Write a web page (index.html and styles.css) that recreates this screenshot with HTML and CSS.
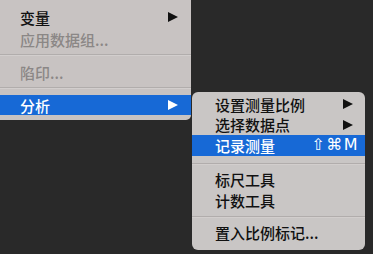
FILE: index.html
```html
<!DOCTYPE html>
<html lang="zh-CN">
<head>
<meta charset="utf-8">
<link rel="stylesheet" href="styles.css">
</head>
<body>
<div class="stage">
  <div class="menu main">
    <div class="item r1"><span class="label">变量</span><span class="arrow"></span></div>
    <div class="item r1 disabled"><span class="label">应用数据组...</span></div>
    <div class="sep s1"></div>
    <div class="item r1 disabled"><span class="label">陷印...</span></div>
    <div class="sep s2"></div>
    <div class="item r2 active"><span class="label">分析</span><span class="arrow"></span></div>
  </div>
  <div class="menu sub">
    <div class="item r3"><span class="label">设置测量比例</span><span class="arrow"></span></div>
    <div class="item r3"><span class="label">选择数据点</span><span class="arrow"></span></div>
    <div class="item r3 active"><span class="label">记录测量</span><span class="key">⇧⌘M</span></div>
    <div class="sep s3"></div>
    <div class="item r3"><span class="label">标尺工具</span></div>
    <div class="item r3"><span class="label">计数工具</span></div>
    <div class="sep s4"></div>
    <div class="item r3"><span class="label">置入比例标记...</span></div>
  </div>
</div>
</body>
</html>
```
FILE: styles.css
```css
html, body {
  margin: 0;
  padding: 0;
  background: #292929;
  width: 373px;
  height: 254px;
  overflow: hidden;
}
.stage {
  display: flex;
  align-items: flex-start;
  font-family: "Noto Sans CJK SC", "Noto Sans", sans-serif;
  font-size: 15px;
  font-weight: 500;
  color: #111111;
}
.menu {
  display: flex;
  flex-direction: column;
  box-sizing: border-box;
}
.main {
  width: 191px;
  height: 120px;
  background: #c8c3c2;
  border-bottom-right-radius: 5px;
  padding-top: 6px;
}
.sub {
  width: 173px;
  height: 158px;
  margin-left: 1px;
  margin-top: 92px;
  background: #c9c6c5;
  border-radius: 6px;
  padding-top: 2px;
  overflow: hidden;
}
.item {
  display: flex;
  align-items: center;
  justify-content: space-between;
  box-sizing: border-box;
}
.main .item { padding: 0 13px 0 20px; }
.sub .item { padding: 0 12px 0 23px; }
.r1 { height: 22px; }
.r2 { height: 20px; }
.r3 { height: 20.5px; }
.label { line-height: 1; }
.disabled { color: #8b8786; }
.active { background: #1769d6; color: #ffffff; }
.arrow {
  width: 0;
  height: 0;
  border-top: 5.5px solid transparent;
  border-bottom: 5.5px solid transparent;
  border-left: 10px solid #111111;
}
.active .arrow { border-left-color: #ffffff; }
.key {
  font-family: "DejaVu Sans", "Liberation Sans", sans-serif;
  font-size: 16px;
  font-weight: normal;
  letter-spacing: 1.5px;
  line-height: 1;
  margin-right: -6px;
}
.sep {
  height: 1px;
  background: #b1adac;
  border-bottom: 1px solid #d2cecd;
}
.s1 { margin: 4px 0 5px; }
.s2 { margin: 4px 0 6px; }
.s3 { margin: 7px 0 5px; }
.s4 { margin: 5px 0 5px; }
```
